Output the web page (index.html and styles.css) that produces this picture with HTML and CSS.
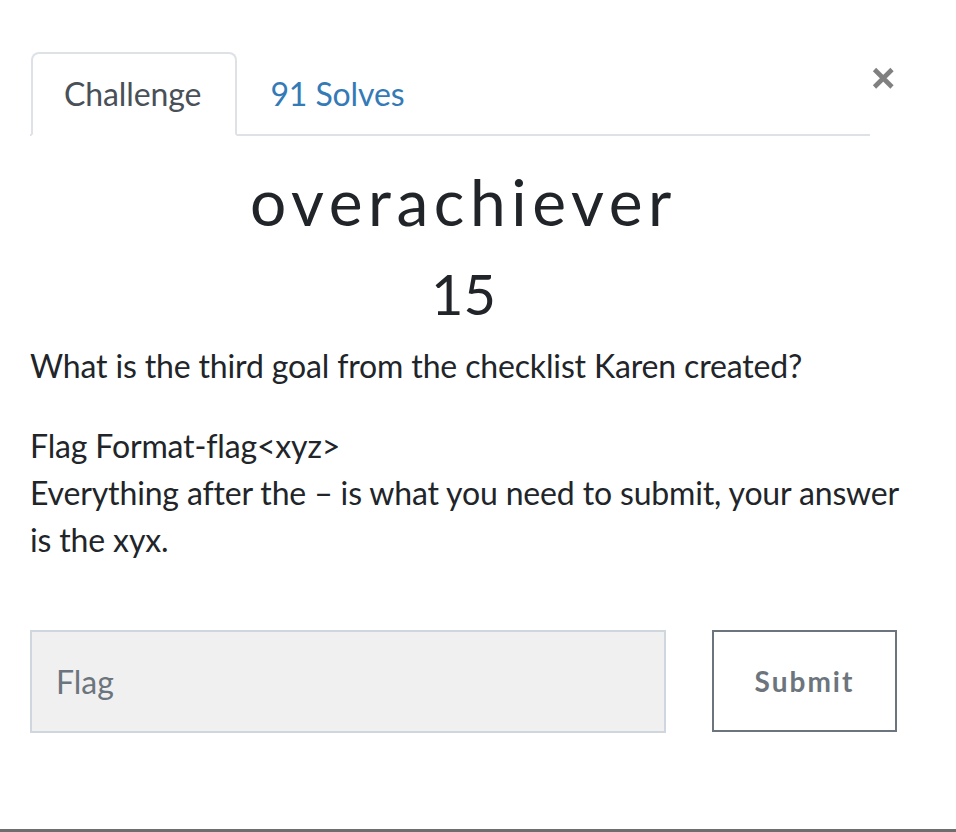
FILE: index.html
```html
<!DOCTYPE html>
<html lang="en">
<head>
<meta charset="utf-8">
<title>overachiever</title>
<link rel="stylesheet" href="styles.css">
</head>
<body>
<div class="modal">
  <div class="modal-body">
    <div class="header">
      <ul class="tabs">
        <li class="tab active">Challenge</li>
        <li class="tab link">91 Solves</li>
      </ul>
      <button class="close" aria-label="Close">
        <svg width="27" height="24" viewBox="0 0 27 24">
          <path d="M4.5 3.5 L22 21 M22 3.5 L4.5 21" stroke="#808080" stroke-width="4.6" fill="none"/>
        </svg>
      </button>
    </div>
    <h2 class="title">overachiever</h2>
    <h3 class="value">15</h3>
    <div class="description">
      <p>What is the third goal from the checklist Karen created?</p>
      <p>Flag Format-flag&lt;xyz&gt;<br><span class="nowrap">Everything after the – is what you need to submit, your answer</span><br>is the xyx.</p>
    </div>
    <form class="submit-row">
      <input class="flag-input" type="text" placeholder="Flag">
      <button class="submit-btn" type="button">Submit</button>
    </form>
  </div>
</div>
</body>
</html>
```
FILE: styles.css
```css
html, body {
  margin: 0;
  padding: 0;
  overflow: hidden;
}
body {
  background: #fff;
  font-family: Lato, "Noto Sans", sans-serif;
  color: #212529;
}
.modal {
  height: 832px;
  box-sizing: border-box;
  border-bottom: 3px solid #6e6e6e;
}
.modal-body {
  width: 867px;
  padding: 52px 0 0 30px;
}
.header {
  display: flex;
  align-items: flex-start;
}
.tabs {
  flex: 1;
  display: flex;
  list-style: none;
  margin: 0;
  padding: 0 0 0 1px;
  border-bottom: 2px solid #dee2e6;
}
.tab {
  font-size: 32px;
  line-height: 48px;
  padding: 16px 34px 16px 31px;
  border: 2px solid transparent;
  border-radius: 8px 8px 0 0;
  margin-bottom: -2px;
  letter-spacing: -0.1px;
}
.tab.active {
  color: #495057;
  border-color: #dee2e6 #dee2e6 #fff;
  background: #fff;
}
.tab.link {
  color: #337ab7;
}
.close {
  width: 27px;
  padding: 0;
  margin: 14px 0 0 0;
  border: 0;
  background: none;
  line-height: 0;
}
.title {
  margin: 28px 0 0;
  text-align: center;
  font-size: 64px;
  font-weight: 400;
  line-height: 1.2;
  letter-spacing: 5.6px;
  color: #212529;
}
.value {
  margin: 19px 0 0;
  text-align: center;
  font-size: 56px;
  font-weight: 400;
  line-height: 1.2;
  color: #212529;
}
.description {
  margin-top: 15px;
  font-size: 32px;
  line-height: 47px;
  letter-spacing: -0.15px;
}
.description p {
  margin: 0 0 33px;
}
.nowrap {
  white-space: nowrap;
}
.submit-row {
  display: flex;
  justify-content: space-between;
  margin-top: 67px;
}
.flag-input {
  width: 636px;
  height: 103px;
  box-sizing: border-box;
  padding: 0 24px;
  border: 2px solid #cfd6de;
  background: #f0f0f0;
  font-family: Lato, sans-serif;
  font-size: 32px;
  color: #495057;
  outline: none;
}
.flag-input::placeholder {
  color: #6c757d;
}
.submit-btn {
  width: 185px;
  height: 102px;
  box-sizing: border-box;
  border: 2px solid #6c757d;
  background: #fff;
  color: #6c757d;
  font-family: Lato, sans-serif;
  font-weight: 700;
  font-size: 28px;
  letter-spacing: 2px;
  padding: 0;
}
```
